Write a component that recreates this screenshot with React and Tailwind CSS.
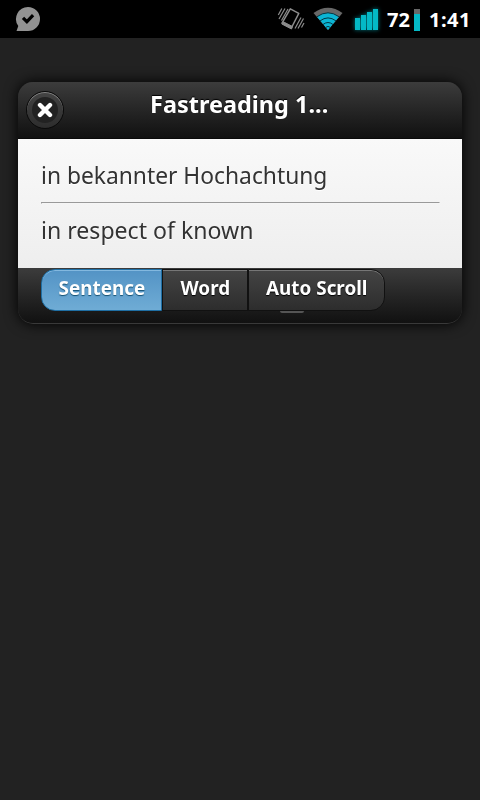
import React, { useState } from "react";

const modes = [
  { name: "Sentence", width: "w-[121px]", edge: "rounded-l-[14px]" },
  { name: "Word", width: "w-[86px]", edge: "" },
  { name: "Auto Scroll", width: "w-[137px]", edge: "rounded-r-[14px]" },
];

const ChatCheckIcon = () => (
  <svg width="26" height="26" viewBox="0 0 26 26">
    <path d="M13 1a12 12 0 1 1 0 24H1.500L3.300 20A12 12 0 0 1 13 1Z" fill="#929292" />
    <path d="m8 11.800 3.900 3.900 6.200-6.500" fill="none" stroke="#000" strokeWidth="3.200" />
  </svg>
);

const VibrateIcon = () => (
  <svg width="28" height="24" viewBox="0 0 28 24" fill="none" stroke="#8c8c8c">
    <path d="M13.300 1.800 21.800 6.300 14.300 21 5 16.200Z" strokeWidth="1.500" strokeLinejoin="round" />
    <path d="M6.300 14.800 15.500 19.500 14.500 22 4.800 17Z" fill="#8c8c8c" strokeLinejoin="round" />
    <path
      d="M4.800 1.500 1.300 8M8 1.500 2 12M11 2 4.500 13.500M18 21.500l6-11M21 21.500l5.500-10M24.500 20.500l2.500-4.500"
      strokeWidth="1.200"
    />
  </svg>
);

const WifiIcon = () => (
  <svg width="30" height="24" viewBox="0 0 30 24" fill="none">
    <path d="M15 23 0.500 6Q15-4.500 29.500 6Z" fill="#686868" />
    <path d="M15 23 4.200 9.900Q15 2 25.800 9.900Z" fill="#0bb5d4" />
    <path
      d="M3.800 9.800q11.200-8 22.400 0M7 13.900q8-6 16 0M10 17.500q5-4 10 0M12.500 20.500q2.500-2.200 5 0"
      stroke="#003845"
      strokeWidth="1"
    />
  </svg>
);

const SignalIcon = () => (
  <svg
    width="24"
    height="22"
    viewBox="0 0 24 22"
    fill="#04b9c6"
    className="drop-shadow-[0_0_2px_#007c86]"
  >
    <path d="M0 9h5v12H0zM6 6h5v15H6zM12 3h5v18h-5zM18 0h5v21h-5z" />
  </svg>
);

const StatusBar = () => (
  <div className="h-[38px] bg-black flex items-start justify-between pl-[15px] pr-[9px] text-white text-[20px] leading-[38px] font-bold">
    <div className="pt-[6px]">
      <ChatCheckIcon />
    </div>
    <div className="flex items-start">
      <div className="pt-[7px] mr-[8px]">
        <VibrateIcon />
      </div>
      <div className="pt-[7px] mr-[12px]">
        <WifiIcon />
      </div>
      <div className="pt-[9px] mr-[8px]">
        <SignalIcon />
      </div>
      <span className="w-[27px] pt-px whitespace-nowrap">72</span>
      <span className="w-[6px] h-[22px] mt-[9px] bg-linear-to-b from-[#686868] from-25% to-[#04b9c6] to-25%" />
      <span className="w-[42px] ml-[9px] pt-px tracking-[0.5px] whitespace-nowrap">1:41</span>
    </div>
  </div>
);

const CloseButton = () => (
  <button
    aria-label="Close"
    className="w-[38px] h-[38px] mt-[9px] ml-[8px] p-[5px] rounded-full border border-[#0a0a0a] bg-linear-to-b from-[#444] to-[#2d2d2d] shadow-[inset_0_1px_0_#888]"
  >
    <span className="flex w-[26px] h-[26px] items-center justify-center rounded-full bg-[#222]">
      <svg
        width="16"
        height="16"
        viewBox="0 0 16 16"
        stroke="#fff"
        strokeWidth="4.400"
        strokeLinecap="round"
      >
        <path d="m3 3 10 10M13 3 3 13" />
      </svg>
    </span>
  </button>
);

const App = () => {
  const [mode, setMode] = useState("Sentence");

  return (
    <div className="w-[480px] h-[800px] overflow-hidden bg-[#222] font-['Noto_Sans','Open_Sans',sans-serif]">
      <StatusBar />
      <div className="mt-[44px] mx-[18px] h-[242px] rounded-[15px] overflow-hidden shadow-[0_0_14px_#000]">
        <div className="flex h-[57px] bg-linear-to-b from-[#3c3c3c] to-[#111] border-b border-[#0a0a0a]">
          <CloseButton />
          <h1 className="ml-[86px] mt-[4px] origin-left scale-x-[0.978] text-[24px] leading-[36px] font-bold text-white whitespace-nowrap [text-shadow:0_-1px_1px_#000]">
            Fastreading 1...
          </h1>
        </div>
        <div className="h-[129px] pl-[23px] pr-[22px] pt-[18px] bg-linear-to-b from-[#f9f9f9] to-[#eee] text-[#333] text-[24px] leading-[36px]">
          <p className="origin-left scale-x-[0.95] whitespace-nowrap [text-shadow:0_1px_0_#fff]">
            in bekannter Hochachtung
          </p>
          <hr className="mt-[9px] h-[2px] border border-t-[#999] border-l-[#999] border-b-[#f5f5f5] border-r-[#f5f5f5]" />
          <p className="mt-[8px] origin-left scale-x-[0.962] whitespace-nowrap [text-shadow:0_1px_0_#fff]">
            in respect of known
          </p>
        </div>
        <div className="h-[56px] pl-[23px] rounded-b-[15px] bg-linear-to-b from-[#3c3c3c] to-[#111] border-b border-[#393939]">
          <div className="flex pt-px">
            {modes.map(({ name, width, edge }) => (
              <button
                key={name}
                onClick={() => setMode(name)}
                className={`${width} ${edge} flex justify-center h-[42px] border text-[20px] leading-[36px] font-bold text-white whitespace-nowrap ${
                  mode === name
                    ? "border-[#1f6fa4] bg-linear-to-b from-[#5393c5] to-[#6facd5] shadow-[inset_0_1px_0_#83b8df] [text-shadow:0_1px_1px_#145072]"
                    : "border-[#111] bg-linear-to-b from-[#444] to-[#2d2d2d] shadow-[inset_0_1px_0_#777] [text-shadow:0_1px_1px_#000]"
                }`}
              >
                <span className="scale-x-[0.943]">{name}</span>
              </button>
            ))}
          </div>
          <div className="ml-[239px] h-[2px] w-[24px] rounded-b-[2px] bg-[#555]" />
        </div>
      </div>
    </div>
  );
};

export default App;
